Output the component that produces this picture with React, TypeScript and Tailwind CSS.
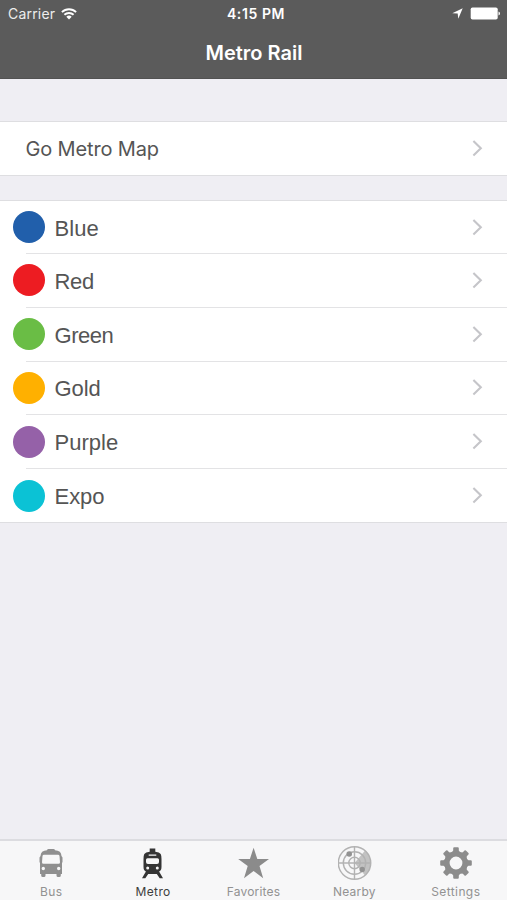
import React from "react";

const lines = [
    { name: "Blue", dot: "bg-[#215fab]", spacing: "tracking-[0px]" },
    { name: "Red", dot: "bg-[#ed1c22]", spacing: "tracking-[-0.4px]" },
    { name: "Green", dot: "bg-[#6abd45]", spacing: "tracking-[-0.5px]" },
    { name: "Gold", dot: "bg-[#ffb000]", spacing: "tracking-[-0.1px]" },
    { name: "Purple", dot: "bg-[#9561a8]", spacing: "tracking-[0px]" },
    { name: "Expo", dot: "bg-[#0bc2d5]", spacing: "tracking-[-0.1px]" },
];

function Chevron() {
    return (
        <svg className="w-[11px] h-[17px] mr-[24px] shrink-0" viewBox="0 0 11 17" fill="none" stroke="#c5c5c9" strokeWidth="2.1">
            <path d="M1.4 1 8.8 8.2 1.4 15.4" />
        </svg>
    )
}

function WifiIcon() {
    return (
        <svg className="w-[16px] h-[12px]" viewBox="0 0 16 12" fill="none" stroke="#fff" strokeWidth="1.9">
            <path d="M.9 4.1a10.2 10.2 0 0 1 14.2 0" />
            <path d="M3.4 6.8a6.6 6.6 0 0 1 9.2 0" />
            <path d="M8 11.4 5.3 8.7a3.9 3.9 0 0 1 5.4 0Z" fill="#fff" stroke="none" />
        </svg>
    )
}

function BusIcon() {
    return (
        <svg className="w-[34px] h-[34px]" viewBox="0 0 34 34">
            <path fill="#8f8f8f" fillRule="evenodd" d="M8.2 5.8Q10 4.4 13 4.2Q13.3 3 14.5 3h5Q20.7 3 21 4.2Q24 4.4 25.8 5.8Q27.3 7 27.5 10L28.5 11.5V16L28 17V28H26.800v1.500q0 1.500-1.500 1.500h-1.300q-1.500 0-1.500-1.500V28h-11v1.500q0 1.500-1.500 1.500H8.700q-1.500 0-1.500-1.500V28H6V17L5.500 16v-4.500L6.500 10Q6.700 7 8.200 5.800ZM10 8.800Q8.700 8.800 8.500 10L8 16.300q0 1.500 1.400 1.500h15.200q1.400 0 1.400-1.500L25.500 10q-.2-1.200-1.500-1.200ZM9.300 20.800a1.700 1.700 0 1 0 0 3.400 1.700 1.700 0 0 0 0-3.400Zm15.400 0a1.700 1.700 0 1 0 0 3.400 1.700 1.700 0 0 0 0-3.400Z" />
        </svg>
    )
}

function MetroIcon() {
    return (
        <svg className="w-[34px] h-[34px]" viewBox="-.5 0 34 34">
            <path fill="#343434" fillRule="evenodd" d="M14.2 2.5h5.6v3.200q4.200.5 5.400 2.400Q26 9.500 26 13v8q0 4.300-3.300 4.800h-11.400Q8 25.300 8 21v-8q0-3.500.8-4.900Q10 6.200 14.200 5.700ZM13.200 8.400v1.300h7.600V8.400ZM12 12.200q-1.500 0-1.500 1.500v2.200q0 2 2 2h9q2 0 2-2v-2.200q0-1.500-1.500-1.500ZM12.200 20.500a1.500 1.500 0 1 0 0 3 1.500 1.500 0 0 0 0-3Zm9.600 0a1.500 1.500 0 1 0 0 3 1.500 1.500 0 0 0 0-3Z" />
            <path fill="#343434" d="M10.700 25h12.600l4.200 7.300h-3.300l-2.900-4.300h-8.600l-2.900 4.300H6.500Z" />
        </svg>
    )
}

function StarIcon() {
    return (
        <svg className="w-[34px] h-[34px]" viewBox="-.5 0 34 34" fill="#8b8b8b">
            <path d="m17.100 1.700 3.700 11.200h11.700l-9.500 7 3.700 12.300-9.600-7.300-9.600 7.300 3.700-12.300-9.500-7h11.700Z" />
        </svg>
    )
}

function RadarIcon() {
    return (
        <svg className="w-[34px] h-[34px]" viewBox=".5 0 34 34" fill="none" stroke="#b2b2b2">
            <path d="M17 17 27.600 4.600A16.300 16.300 0 0 1 27.600 29.400Z" fill="#c2c2c2" stroke="none" />
            <circle cx="17" cy="17" r="16.2" strokeWidth="1.5" />
            <circle cx="17" cy="17" r="11.2" strokeWidth="1.4" />
            <circle cx="17" cy="17" r="5.7" strokeWidth="1.4" />
            <path d="M17 1v32M1 17h32" strokeWidth="1.4" />
            <circle cx="11.7" cy="8" r="2.8" fill="#929292" stroke="none" />
            <circle cx="24.7" cy="23.4" r="2.7" fill="#929292" stroke="none" />
        </svg>
    )
}

function GearIcon() {
    const teeth = [0, 45, 90, 135, 180, 225, 270, 315];
    return (
        <svg className="w-[34px] h-[34px]" viewBox="0 0 34 34" fill="#8c8c8c">
            <circle cx="17" cy="17" r="9.1" fill="none" stroke="#8c8c8c" strokeWidth="5.4" />
            {teeth.map((angle) => (
                <path key={angle} d="M12.600 6.800 14.200 4.500V2.200q0-1 1-1h3.600q1 0 1 1v2.300l1.600 2.300Z" transform={`rotate(${angle} 17 17)`} />
            ))}
        </svg>
    )
}

const tabs = [
    { label: "Bus", icon: <BusIcon />, color: "text-[#929292]", text: "tracking-[0.4px] pl-[1px]" },
    { label: "Metro", icon: <MetroIcon />, color: "text-[#3d3d3d]", text: "tracking-[0.35px] pl-[2px]" },
    { label: "Favorites", icon: <StarIcon />, color: "text-[#929292]", text: "tracking-[0.2px]" },
    { label: "Nearby", icon: <RadarIcon />, color: "text-[#929292]", text: "tracking-[0.25px] pr-[1px]" },
    { label: "Settings", icon: <GearIcon />, color: "text-[#929292]", text: "tracking-[0.4px] pr-[1px]" },
];

export default function App() {
    return (
        <div className="w-full h-screen flex flex-col overflow-hidden bg-[#efeef3] font-['Inter',sans-serif] text-[#555]">
            <header className="h-[79px] shrink-0 bg-[#5b5b5b] border-b border-[#525252] text-white">
                <div className="h-[27px] grid grid-cols-3 items-center text-[14px]">
                    <div className="flex items-center gap-[6px] pl-[8px] text-[#ededed]">
                        <span className="tracking-[0.2px]">Carrier</span>
                        <WifiIcon />
                    </div>
                    <span className="text-center font-semibold text-[14px] tracking-[0.6px] pl-[5px]">4:15 PM</span>
                    <div className="flex items-center justify-end gap-[7px] pr-[7px]">
                        <svg className="w-[11px] h-[11px]" viewBox="0 0 11 11" fill="#fff">
                            <path d="M10.7.3 6.3 10.7 5.7 5.5.3 5.2Z" />
                        </svg>
                        <svg className="w-[30px] h-[13px]" viewBox="0 0 30 13" fill="#fff">
                            <rect x=".7" y=".5" width="27" height="12" rx="1.8" />
                            <path d="M28.5 4.5q1.500.5 1.500 2t-1.500 2Z" />
                        </svg>
                    </div>
                </div>
                <h1 className="h-[51px] flex items-center justify-center pl-px text-[20px] font-semibold tracking-[0px]">Metro Rail</h1>
            </header>

            <main className="flex-1 pt-[42px]">
                <div className="h-[55px] flex items-center justify-between bg-white border-y border-[#dedee1] pl-[25.5px]">
                    <span className="text-[20px] tracking-[-0.15px]">Go Metro Map</span>
                    <Chevron />
                </div>

                <ul className="mt-[24px] bg-white border-y border-[#dedee1]">
                    {lines.map((line, i) => (
                        <li key={line.name}>
                            {i > 0 && <div className="h-px ml-[26px] bg-[#e3e3e5]" />}
                            <div className={i === 0 ? "h-[52px] flex items-center pl-[13px]" : "h-[52.8px] flex items-center pl-[13px]"}>
                                <span className={`size-[32px] rounded-full shrink-0 ${line.dot}`} />
                                <span className={`ml-[9.6px] pt-[2px] flex-1 font-['Liberation_Sans',sans-serif] text-[22px] ${line.spacing}`}>{line.name}</span>
                                <Chevron />
                            </div>
                        </li>
                    ))}
                </ul>
            </main>

            <nav className="h-[61px] shrink-0 grid grid-cols-5 bg-[#f7f7f8] border-t-2 border-[#dcdce0] pt-[5px]">
                {tabs.map((tab) => (
                    <div key={tab.label} className={`flex flex-col items-center ${tab.color}`}>
                        {tab.icon}
                        <span className={`mt-[4px] text-[12px] leading-[16px] ${tab.text}`}>{tab.label}</span>
                    </div>
                ))}
            </nav>
        </div>
    )
}
